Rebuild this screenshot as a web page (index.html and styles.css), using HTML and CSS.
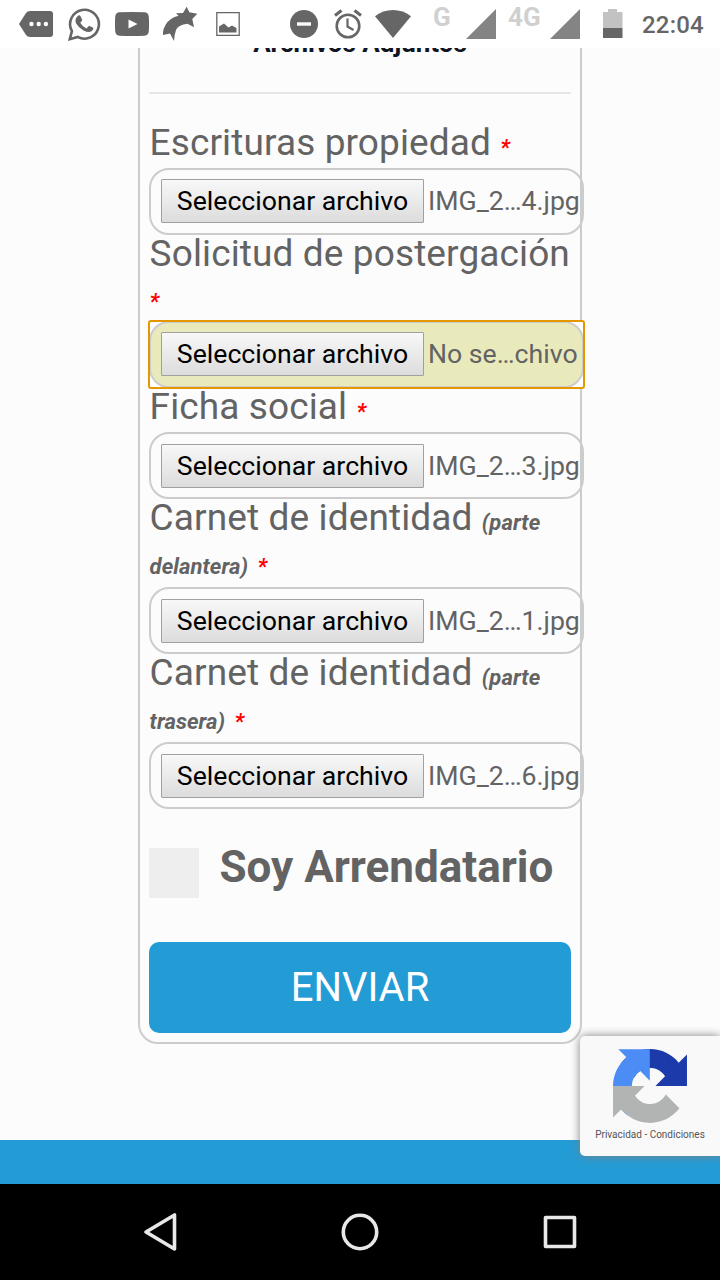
FILE: index.html
```html
<!DOCTYPE html>
<html lang="es">
<head>
  <meta charset="UTF-8">
  <meta name="viewport" content="width=device-width, initial-scale=1.0">
  <title>Archivos Adjuntos</title>
  <link rel="stylesheet" href="styles.css">
</head>
<body>
  <header class="status-bar">
    <div class="notifications">
      <svg width="34" height="48" viewBox="0 0 34 48"><path fill="#666" d="M0 24L7 13Q8.500 11 11 11H31Q34 11 34 14V34Q34 37 31 37H11Q8.500 37 7 35Z"/><g fill="#fff"><circle cx="12.500" cy="24" r="2.200"/><circle cx="19.700" cy="24" r="2.200"/><circle cx="26.900" cy="24" r="2.200"/></g></svg>
      <svg width="34" height="48" viewBox="0 0 34 48"><path fill="none" stroke="#666" stroke-width="2.600" d="M2.800 39.200L4.900 31.200A14.400 14.400 0 1 1 10.700 36.900Z"/><path fill="#666" d="M11.300 16.300Q12.600 15.600 13.400 16.800L15.200 20.600Q15.300 21.400 13.300 23.600Q15.300 27.600 19.500 29.200L22 26.500L26.300 28.600Q26.800 30.500 24.500 32.100Q21.500 33.900 16.500 31.200Q11.500 28.500 9 24Q7.200 19.500 11.300 16.300Z" transform="translate(0 -.8)"/></svg>
      <svg width="34" height="48" viewBox="0 0 34 48"><path fill="#666" d="M4.500 12.300Q17 11.500 29.500 12.300Q33.500 12.500 33.800 17Q34.300 24 33.800 31Q33.500 35.500 29.500 35.700Q17 36.500 4.500 35.700Q.5 35.500.2 31Q-.3 24 .2 17Q.5 12.500 4.500 12.300Z"/><path fill="#fff" d="M13.500 19.500V28.500L22.500 24Z"/></svg>
      <svg width="35" height="48" viewBox="0 0 35 48"><path fill="#666" d="M0 35Q-.5 30 2.500 25Q7 17.500 15.500 15.800L13 13.300L20 13L23.700 6.700L26.300 12.300L34.300 13.700L29.300 19L31 27.300L24.500 23.800Q15.500 24.500 13 30Q11.500 34 11 41L7 33.500Z"/></svg>
      <svg width="24" height="48" viewBox="0 0 24 48"><path fill="none" stroke="#666" stroke-width="1.300" d="M.8 12.700H23.200V35.300H.8Z"/><path fill="#666" d="M3 32.500V26.500L8 23.500L12.500 27.500L16 25.500L20.500 28V32.500Z"/></svg>
    </div>
    <div class="signals">
      <svg width="28" height="48" viewBox="0 0 28 48"><circle cx="14" cy="24" r="14" fill="#666"/><path fill="#fff" d="M7 22.300H21V25.700H7Z"/></svg>
      <svg width="28" height="48" viewBox="0 0 28 48"><g fill="none" stroke="#666"><circle cx="14" cy="26" r="11.300" stroke-width="2.600"/><path stroke-width="2.200" d="M13.500 18.500V26.500L19.500 30"/><path stroke-width="3" d="M1 15.500L7.500 10.500M20.500 10.500L27 15.500"/></g></svg>
      <svg width="36" height="48" viewBox="0 0 36 48"><path fill="#666" d="M0 16.300Q8 10 18 10T36 16.300L18 38Z"/></svg>
      <span class="network">G</span>
      <svg width="30" height="48" viewBox="0 0 30 48"><path fill="#848484" d="M0 39L30 9V39Z"/></svg>
      <span class="network network-4g">4G</span>
      <svg width="30" height="48" viewBox="0 0 30 48"><path fill="#848484" d="M0 39L30 9V39Z"/></svg>
      <svg class="battery" width="20" height="48" viewBox="0 0 20 48"><path fill="#c2c2c2" d="M0 12H5V9H14V12H19.500V28H0Z"/><path fill="#666" d="M0 28H19.500V38H0Z"/></svg>
      <span class="clock">22:04</span>
    </div>
  </header>

  <main class="page">
    <form class="card">
      <h2 class="title">Archivos Adjuntos</h2>

      <div class="field">
        <div class="label">Escrituras propiedad <em class="required">*</em></div>
        <div class="file"><button type="button" class="choose">Seleccionar archivo</button><span>IMG_2…4.jpg</span></div>
      </div>
      <div class="field">
        <div class="label label-wide">Solicitud de postergación <em class="required">*</em></div>
        <div class="focus"><div class="file selected"><button type="button" class="choose">Seleccionar archivo</button><span>No se…chivo</span></div></div>
      </div>
      <div class="field">
        <div class="label">Ficha social <em class="required">*</em></div>
        <div class="file"><button type="button" class="choose">Seleccionar archivo</button><span>IMG_2…3.jpg</span></div>
      </div>
      <div class="field">
        <div class="label">Carnet de identidad <em>(parte delantera)</em> <em class="required">*</em></div>
        <div class="file"><button type="button" class="choose">Seleccionar archivo</button><span>IMG_2…1.jpg</span></div>
      </div>
      <div class="field">
        <div class="label">Carnet de identidad <em>(parte trasera)</em> <em class="required">*</em></div>
        <div class="file"><button type="button" class="choose">Seleccionar archivo</button><span>IMG_2…6.jpg</span></div>
      </div>

      <div class="check">
        <span class="box"></span>
        <span class="check-text">Soy Arrendatario</span>
      </div>
      <button type="button" class="send">ENVIAR</button>
    </form>
    <footer class="footer"></footer>
  </main>

  <div class="recaptcha">
    <svg width="74" height="74" viewBox="0 0 64 64">
      <path fill="#1c3aa9" d="M64 31.955l-.033-1.370V4.687l-7.160 7.160C50.948 4.674 42.033.093 32.050.093c-10.400 0-19.622 4.960-25.458 12.640l11.736 11.860a15.550 15.550 0 0 1 4.754-5.334c2.050-1.600 4.952-2.906 8.968-2.906.485 0 .860.057 1.135.163 4.976.393 9.288 3.140 11.828 7.124l-8.307 8.307L64 31.953"/>
      <path fill="#4c8df5" d="M31.862.094l-1.370.033H4.594l7.160 7.160C4.580 13.147 0 22.060 0 32.046c0 10.400 4.960 19.622 12.640 25.458L24.500 45.768a15.550 15.550 0 0 1-5.334-4.754c-1.600-2.050-2.906-4.952-2.906-8.968 0-.485.057-.860.163-1.135.393-4.976 3.140-9.288 7.124-11.828l8.307 8.307L31.860.095"/>
      <path fill="#b2b3b3" d="M.001 32.045l.033 1.370v25.898l7.160-7.160c5.860 7.173 14.774 11.754 24.760 11.754 10.400 0 19.622-4.960 25.458-12.640l-11.736-11.860a15.550 15.550 0 0 1-4.754 5.334c-2.050 1.600-4.952 2.906-8.968 2.906-.485 0-.860-.057-1.135-.163-4.976-.393-9.288-3.140-11.828-7.124l8.307-8.307c-10.522.040-22.400.066-27.295-.005"/>
    </svg>
    <span>Privacidad - Condiciones</span>
  </div>

  <nav class="nav-bar">
    <svg width="40" height="40" viewBox="0 0 40 40"><path d="M34.500 3V37L6 20Z"/></svg>
    <svg width="40" height="40" viewBox="0 0 40 40"><circle cx="20" cy="20" r="16.700"/></svg>
    <svg width="40" height="40" viewBox="0 0 40 40"><path d="M5.500 5.500H34.500V34.500H5.500Z"/></svg>
  </nav>
</body>
</html>
```
FILE: styles.css
```css
* {
  box-sizing: border-box;
}
body {
  margin: 0;
  height: 1280px;
  display: flex;
  flex-direction: column;
  overflow: hidden;
  font-family: Roboto, sans-serif;
  color: #636363;
  background: #fcfcfc;
}
svg {
  display: block;
  flex: none;
}

/* barra de estado */
.status-bar {
  flex: none;
  height: 48px;
  display: flex;
  background: #fff;
}
.notifications {
  display: flex;
  gap: 14px;
  padding-left: 19px;
  width: 290px;
}
.notifications svg:last-child {
  margin-left: 4px;
}
.signals {
  display: flex;
  gap: 16px;
}
.signals svg:nth-child(3) {
  margin-left: -3px;
}
.network {
  width: 23px;
  margin-left: 6px;
  margin-right: -6px;
  font-size: 26px;
  line-height: 35px;
  font-weight: 700;
  color: #d0d0d0;
}
.network-4g {
  width: 38px;
  margin-left: -4px;
  margin-right: -12px;
}
.battery {
  margin-left: 7px;
}
.clock {
  margin-left: 3px;
  font-size: 24px;
  line-height: 50px;
  font-weight: 500;
  letter-spacing: 0.2px;
  color: #666;
}

/* formulario */
.page {
  flex: 1;
  display: flex;
  flex-direction: column;
  align-items: center;
  overflow: hidden;
}
.card {
  flex: none;
  width: 444px;
  height: 1026px;
  margin-top: -30px;
  padding: 14px 9px 9px;
  border: 2px solid #ccc;
  border-radius: 20px;
}
.title {
  height: 60px;
  margin: 0 0 29.7px;
  border-bottom: 2px solid #e6e6e6;
  font-size: 26px;
  line-height: 18px;
  text-align: center;
  color: #101522;
}
.label {
  margin-top: -3px;
  padding: 0 0 3px 0.6px;
  font-size: 37px;
  line-height: 44px;
  letter-spacing: 0.12px;
}
.label-wide {
  height: 89px;
  line-height: 43px;
}
.label em {
  font-size: 22px;
  line-height: 1;
  font-weight: 700;
  letter-spacing: 0.08px;
}
.label .required {
  color: #f00;
}
.file {
  width: 435px;
  height: 67px;
  display: flex;
  align-items: center;
  gap: 4px;
  padding-left: 10px;
  border: 2px solid #ccc;
  border-radius: 20px;
  font-size: 26.67px;
  white-space: nowrap;
}
.choose {
  width: 263px;
  height: 44px;
  padding: 0;
  border: 1px solid #a0a0a0;
  border-radius: 1px;
  background: linear-gradient(#f8f8f8, #dcdcdc);
  font-family: inherit;
  font-size: 26.67px;
  color: #000;
}
.focus {
  width: 435px;
  margin-bottom: 0.5px;
  border-radius: 2px;
  outline: 2px solid #e59700;
  outline-offset: -1px;
  background: #fff;
}
.selected {
  background: #e8eabc;
}
.check {
  display: flex;
  gap: 20.5px;
  margin-top: 39px;
}
.box {
  width: 50px;
  height: 50px;
  background: #eee;
}
.check-text {
  font-size: 44px;
  line-height: 38px;
  font-weight: 700;
}
.send {
  display: block;
  width: 422px;
  height: 91px;
  margin-top: 44px;
  border: none;
  border-radius: 10px;
  background: #239bd5;
  font-family: inherit;
  font-size: 40px;
  color: #fff;
}
.footer {
  width: 100%;
  height: 44px;
  flex: none;
  margin-top: auto;
  background: #239bd5;
}

/* insignia de recaptcha */
.recaptcha {
  position: absolute;
  left: 580px;
  top: 1036px;
  width: 140px;
  height: 120px;
  display: flex;
  flex-direction: column;
  align-items: center;
  padding-top: 13px;
  border-radius: 5px 0 0 5px;
  background: #f9f9f9;
  box-shadow: 0 0 10px #808080;
  font-size: 10px;
  line-height: 24px;
  color: #555;
}

/* navegación */
.nav-bar {
  flex: none;
  height: 96px;
  display: flex;
  justify-content: center;
  align-items: center;
  gap: 160px;
  background: #000;
}
.nav-bar svg {
  fill: none;
  stroke: #e8e8e8;
  stroke-width: 3.6;
  stroke-linejoin: round;
}
```
